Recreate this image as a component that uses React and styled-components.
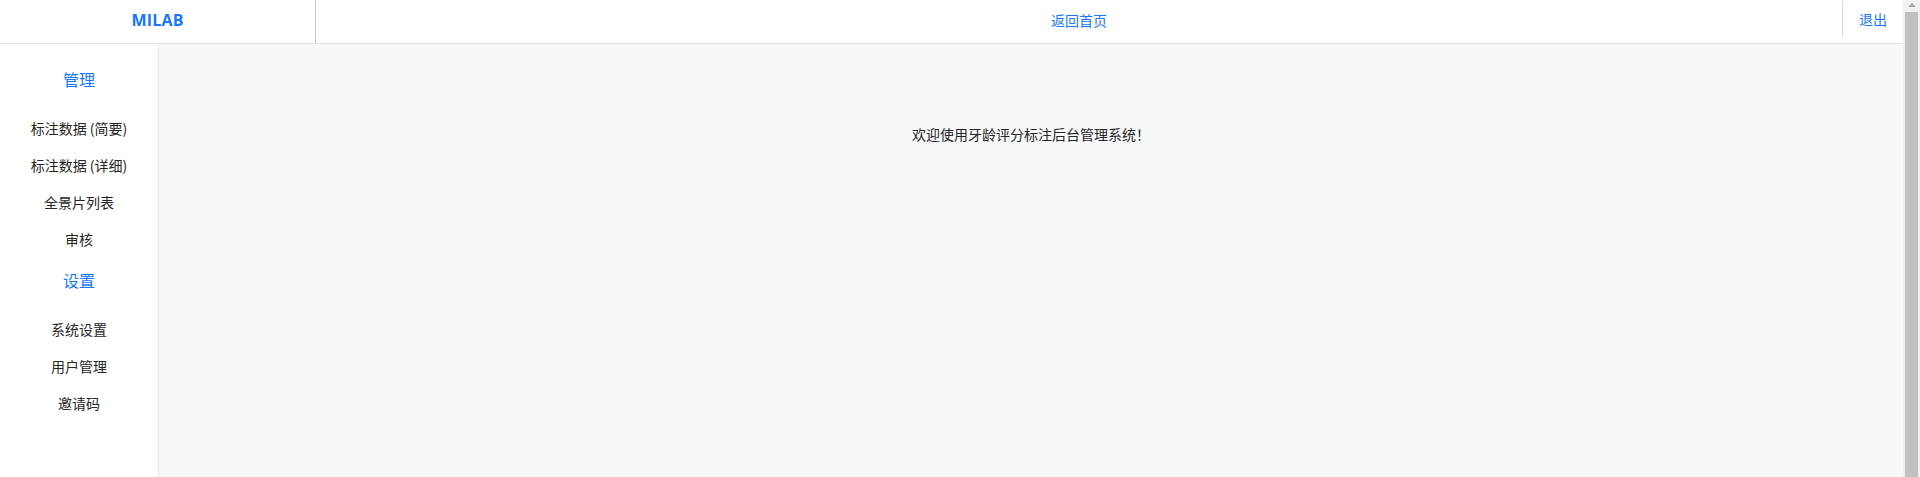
import React from 'react';
import styled, { createGlobalStyle } from 'styled-components';

const GlobalStyle = createGlobalStyle`
  html, body {
    margin: 0;
    padding: 0;
    background: #ffffff;
    font-family: "Segoe UI", "Noto Sans CJK SC", "Open Sans", sans-serif;
  }
`;

const Shell = styled.div`
  display: flex;
  height: 100vh;
  overflow: hidden;
`;

const Page = styled.div`
  flex: 1;
  display: flex;
  flex-direction: column;
  min-width: 0;
`;

// window scrollbar as it shows in the screenshot
const ScrollBar = styled.div`
  width: 17px;
  background: #f1f1f1;
  display: flex;
  flex-direction: column;
`;

const ScrollArrow = styled.div`
  height: 12px;
  display: flex;
  justify-content: center;
  align-items: flex-start;
  padding-top: 3px;
  box-sizing: border-box;
`;

const ScrollThumb = styled.div`
  flex: 1;
  margin: 0 2px;
  background: #c1c1c1;
`;

const Header = styled.header`
  display: flex;
  height: 43px;
  border-bottom: 1px solid #e2e3e6;
  background: #fff;
`;

const Logo = styled.div`
  width: 316px;
  border-right: 1px solid #c8c8c8;
  padding-bottom: 3px;
  box-sizing: border-box;
  display: flex;
  align-items: center;
  justify-content: center;
  color: #1677ff;
  font-family: "Open Sans", "Noto Sans", sans-serif;
  font-weight: 700;
  font-size: 16px;
  letter-spacing: 0.2px;
`;

const HomeLink = styled.a`
  flex: 1;
  display: flex;
  align-items: center;
  justify-content: center;
  padding-bottom: 3px;
  color: #1677ff;
  font-size: 14px;
  text-decoration: none;
  cursor: pointer;
`;

const Logout = styled.a`
  display: flex;
  align-items: center;
  height: 36px;
  align-self: flex-start;
  margin-top: 1px;
  padding: 0 16px 1px;
  box-sizing: border-box;
  border-left: 1px solid #dcdcdc;
  color: #1677ff;
  font-size: 14px;
  cursor: pointer;
`;

const Body = styled.div`
  flex: 1;
  display: flex;
`;

const Sidebar = styled.nav`
  width: 158px;
  border-right: 1px solid #e6e7ea;
  background: #fff;
  padding-top: 13px;
  display: flex;
  flex-direction: column;
  align-items: center;
`;

const GroupTitle = styled.div`
  height: 37px;
  line-height: 37px;
  margin: 4px 0 12px;
  color: #1677ff;
  font-size: 16px;
`;

const NavItem = styled.div`
  height: 37px;
  line-height: 37px;
  color: #262626;
  font-size: 14px;
  cursor: pointer;
`;

const Main = styled.main`
  flex: 1;
  background: #f7f8fa;
  padding-top: 80px;
  text-align: center;
  color: #262626;
  font-size: 14px;
  line-height: 20px;
`;

const groups = [
  { title: '管理', items: ['标注数据 (简要)', '标注数据 (详细)', '全景片列表', '审核'] },
  { title: '设置', items: ['系统设置', '用户管理', '邀请码'] },
];

export default function App() {
  return (
    <Shell>
      <GlobalStyle />
      <Page>
        <Header>
          <Logo>MILAB</Logo>
          <HomeLink>返回首页</HomeLink>
          <Logout>退出</Logout>
        </Header>
        <Body>
          <Sidebar>
            {groups.map((g) => (
              <React.Fragment key={g.title}>
                <GroupTitle>{g.title}</GroupTitle>
                {g.items.map((it) => (
                  <NavItem key={it}>{it}</NavItem>
                ))}
              </React.Fragment>
            ))}
          </Sidebar>
          <Main>欢迎使用牙龄评分标注后台管理系统！</Main>
        </Body>
      </Page>
      <ScrollBar>
        <ScrollArrow>
          <svg width="8" height="4" viewBox="0 0 8 4">
            <path d="M0 4 L4 0 L8 4 Z" fill="#a3a3a3" />
          </svg>
        </ScrollArrow>
        <ScrollThumb />
      </ScrollBar>
    </Shell>
  );
}
